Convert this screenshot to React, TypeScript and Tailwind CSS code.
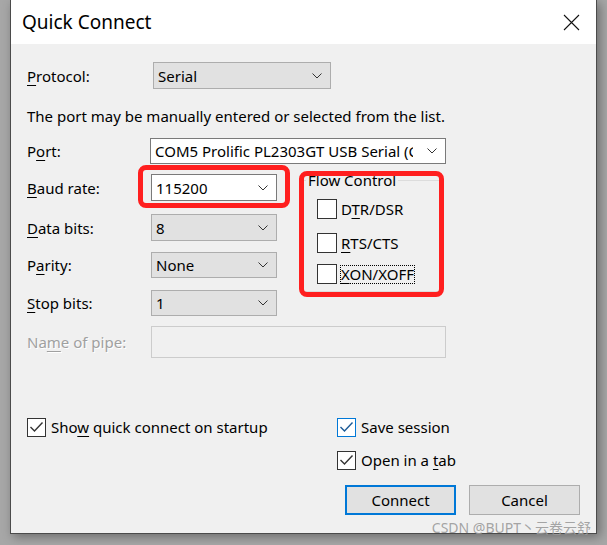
import type { ReactNode } from "react";

const Chevron = () => (
  <svg width="10" height="6" viewBox="0 0 10 6" className="shrink-0">
    <polyline points="0.5,0.5 5,5 9.5,0.5" fill="none" stroke="#333" strokeWidth="1" />
  </svg>
);

function Combo({
  value,
  white = false,
  className = "",
}: {
  value: string;
  white?: boolean;
  className?: string;
}) {
  return (
    <div
      className={`flex items-center border pl-[4px] pr-[8px] ${
        white ? "border-[#7a7a7a] bg-white" : "border-[#adadad] bg-[#e1e1e1]"
      } ${className}`}
    >
      <span className="min-w-0 flex-1 overflow-hidden whitespace-nowrap mr-[14px]">{value}</span>
      <Chevron />
    </div>
  );
}

// label with an underlined access key
function Acc({ pre, k, post }: { pre?: string; k: string; post?: string }) {
  return (
    <span className="whitespace-nowrap">
      {pre}
      <span className="underline decoration-1 underline-offset-[3px]">{k}</span>
      {post}
    </span>
  );
}

function Field({
  label,
  labelWidth = "w-[124px]",
  children,
  className = "",
}: {
  label: ReactNode;
  labelWidth?: string;
  children: ReactNode;
  className?: string;
}) {
  return (
    <div className={`flex items-center ${className}`}>
      <div className={`shrink-0 ${labelWidth}`}>{label}</div>
      {children}
    </div>
  );
}

function Box({ checked = false, focus = false, size = "h-[19px] w-[19px]" }: { checked?: boolean; focus?: boolean; size?: string }) {
  return (
    <div
      className={`flex shrink-0 items-center justify-center border bg-white ${size} ${
        focus ? "border-[#0078d7]" : "border-[#333]"
      }`}
    >
      {checked && (
        <svg width="15" height="12" viewBox="0 0 15 12">
          <polyline
            points="1.5,6 5.5,10 13.5,1.5"
            fill="none"
            stroke={focus ? "#1b5a96" : "#333"}
            strokeWidth="1.4"
          />
        </svg>
      )}
    </div>
  );
}

export default function App() {
  return (
    <div className="relative h-[545px] w-[607px] overflow-hidden bg-[#a7a7a7] font-['Noto_Sans',sans-serif] text-[15px] leading-[20px] text-black">
      <div className="ml-[10px] flex h-[534px] w-[587px] flex-col border-x border-b border-[#4b4b4b] bg-[#f0f0f0] shadow-[3px_3px_10px_rgba(0,0,0,0.35)]">
        {/* title bar */}
        <div className="flex h-[44px] shrink-0 items-center justify-between bg-white pl-[11px] pr-[16px]">
          <span className="text-[19px] leading-[24px]">Quick Connect</span>
          <svg width="17" height="17" viewBox="0 0 17 17">
            <path d="M1 1 L16 16 M16 1 L1 16" stroke="#111" strokeWidth="1.1" fill="none" />
          </svg>
        </div>

        <div className="flex flex-1 flex-col pl-[16px]">
          <Field label={<Acc k="P" post="rotocol:" />} labelWidth="w-[126px]" className="mt-[18px]">
            <Combo value="Serial" className="h-[27px] w-[178px]" />
          </Field>

          <p className="mt-[17px] whitespace-nowrap">The port may be manually entered or selected from the list.</p>

          <Field label={<Acc pre="P" k="o" post="rt:" />} labelWidth="w-[123px]" className="mt-[12px]">
            <Combo white value="COM5 Prolific PL2303GT USB Serial (COM5)" className="h-[26px] w-[296px]" />
          </Field>

          <div className="mt-[6px] flex">
            <div className="flex w-[250px] flex-col pt-[4px]">
              <Field label={<Acc k="B" post="aud rate:" />}>
                <Combo white value="115200" className="h-[27px] w-[126px]" />
              </Field>
              <Field label={<Acc k="D" post="ata bits:" />} className="mt-[13px]">
                <Combo value="8" className="h-[27px] w-[126px]" />
              </Field>
              <Field label={<Acc pre="P" k="a" post="rity:" />} className="mt-[11px]">
                <Combo value="None" className="h-[26px] w-[126px]" />
              </Field>
              <Field label={<Acc k="S" post="top bits:" />} className="mt-[12px]">
                <Combo value="1" className="h-[26px] w-[126px]" />
              </Field>
            </div>

            <fieldset className="ml-[24px] w-[139px] self-start border border-[#dcdcdc] pb-[7px]">
              <legend className="ml-[4px] px-[2px] leading-[20px]">Flow Control</legend>
              <div className="flex flex-col pl-[15px]">
                <div className="mt-[9px] flex h-[20px] items-center gap-[4px]">
                  <Box size="h-[20px] w-[20px]" />
                  <Acc pre="D" k="T" post="R/DSR" />
                </div>
                <div className="mt-[14px] flex h-[20px] items-center gap-[4px]">
                  <Box size="h-[20px] w-[20px]" />
                  <Acc k="R" post="TS/CTS" />
                </div>
                <div className="mt-[11px] flex h-[20px] items-center gap-[3px]">
                  <Box size="h-[20px] w-[20px]" />
                  <span className="flex h-[19px] items-center border border-dotted border-black">
                    <Acc k="X" post="ON/XOFF" />
                  </span>
                </div>
              </div>
            </fieldset>
          </div>

          <Field
            label={<span className="text-[#a0a0a0] [text-shadow:1px_1px_0_#fff]"><Acc pre="Na" k="m" post="e of pipe:" /></span>}
            className="mt-[10px]"
          >
            <div className="h-[32px] w-[295px] border border-[#cccccc] bg-[#f0f0f0]" />
          </Field>

          <div className="mt-[59px] flex items-start">
            <div className="flex w-[310px] items-center gap-[5px]">
              <Box checked />
              <Acc pre="Sho" k="w" post=" quick connect on startup" />
            </div>
            <div className="flex flex-col">
              <div className="flex items-center gap-[5px]">
                <Box checked focus />
                <span>Save session</span>
              </div>
              <div className="mt-[13px] flex items-center gap-[5px]">
                <Box checked />
                <Acc pre="Open in a " k="t" post="ab" />
              </div>
            </div>
          </div>

          <div className="mt-[15px] flex justify-end gap-[13px] pr-[16px]">
            <button className="h-[30px] w-[111px] border-2 border-[#0078d7] bg-[#e1e1e1]">Connect</button>
            <button className="h-[30px] w-[111px] border border-[#adadad] bg-[#e1e1e1]">Cancel</button>
          </div>
        </div>
      </div>

      {/* red annotation boxes */}
      <div className="absolute left-[138px] top-[165px] h-[43px] w-[152px] rounded-[8px] border-[5px] border-[#ff1f1f]" />
      <div className="absolute left-[299px] top-[171px] h-[126px] w-[145px] rounded-[8px] border-[5px] border-[#ff1f1f]" />

      <span className="absolute right-[16px] top-[519px] font-['Noto_Sans','Noto_Sans_CJK_SC',sans-serif] text-[14px] leading-[18px] text-[#9a9a9a]/90">
        CSDN @BUPT丶云卷云舒
      </span>
    </div>
  );
}
